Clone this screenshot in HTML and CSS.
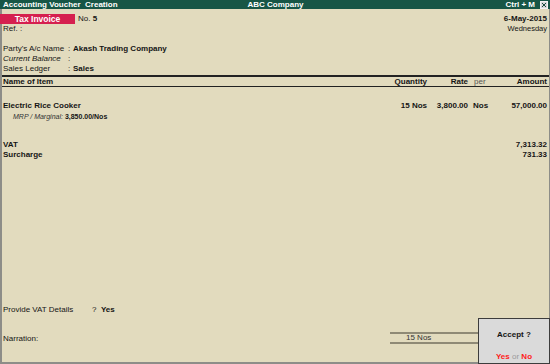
FILE: index.html
```html
<!DOCTYPE html>
<html lang="en">
<head>
    <meta charset="UTF-8">
    <meta name="viewport" content="width=device-width, initial-scale=1.0">
    <title>Accounting Voucher Creation</title>
    <link rel="stylesheet" href="styles.css">
</head>
<body>
    <div class="window">
        <div class="titlebar">
            <span class="title-left">Accounting Voucher &nbsp;Creation</span>
            <span class="title-mid">ABC Company</span>
            <span class="title-right">Ctrl + M
                <svg class="close" width="8" height="8" viewBox="0 0 8 8">
                    <rect x="0.5" y="0.5" width="7" height="7" fill="#d9d9d9" stroke="#f4f4f4"/>
                    <path d="M2 2 L6 6 M6 2 L2 6" stroke="#1a4d40" stroke-width="1"/>
                </svg>
            </span>
        </div>

        <div class="screen">
            <div class="head">
                <div class="head-left">
                    <div class="row">
                        <span class="badge">Tax Invoice</span>
                        <span class="no">No. <b>5</b></span>
                    </div>
                    <div class="row">Ref. :</div>
                </div>
                <div class="head-right">
                    <div class="row date">6-May-2015</div>
                    <div class="row day">Wednesday</div>
                </div>
            </div>

            <div class="party">
                <div class="row"><span class="lbl">Party's A/c Name</span><span class="colon">:</span><b>Akash Trading Company</b></div>
                <div class="row"><i class="lbl">Current Balance</i><span class="colon">:</span></div>
                <div class="row"><span class="lbl">Sales Ledger</span><span class="colon">:</span><b>Sales</b></div>
            </div>

            <div class="grid thead">
                <span>Name of Item</span>
                <span class="r">Quantity</span>
                <span class="r">Rate</span>
                <span class="per">per</span>
                <span class="r">Amount</span>
            </div>

            <div class="grid item">
                <span>Electric Rice Cooker</span>
                <span class="r">15 Nos</span>
                <span class="r">3,800.00</span>
                <span class="per-val">Nos</span>
                <span class="r">57,000.00</span>
            </div>
            <div class="mrp"><i>MRP / Marginal:</i> <b>3,850.00/Nos</b></div>

            <div class="grid tax first">
                <span>VAT</span><span></span><span></span><span></span>
                <span class="r">7,313.32</span>
            </div>
            <div class="grid tax">
                <span>Surcharge</span><span></span><span></span><span></span>
                <span class="r">731.33</span>
            </div>

            <div class="spacer"></div>

            <div class="foot">
                <div class="row vat"><span class="vat-lbl">Provide VAT Details</span><span>? &nbsp;<b>Yes</b></span></div>
                <div class="narration">
                    <span class="nar-lbl">Narration:</span>
                    <span class="total">15 Nos</span>
                </div>
            </div>
        </div>

        <div class="accept">
            <div class="accept-q">Accept ?</div>
            <div class="accept-a"><span class="red">Yes</span> <span class="or">or</span> <span class="red">No</span></div>
        </div>
    </div>
</body>
</html>
```

FILE: styles.css
```css
body {
    margin: 0;
    background-color: #e2dbbe;
    font-family: "Liberation Sans", Arial, sans-serif;
    font-size: 8px;
    color: #151515;
}
.window {
    position: relative;
    width: 550px;
    height: 364px;
    display: flex;
    flex-direction: column;
}
.titlebar {
    height: 9px;
    line-height: 9px;
    background-color: #175646;
    color: #ffffff;
    font-weight: bold;
    display: grid;
    grid-template-columns: 1fr auto 1fr;
    padding: 0 2px 0 3px;
    white-space: nowrap;
}
.title-right {
    display: flex;
    justify-content: flex-end;
    align-items: center;
    gap: 5px;
}
.close {
    display: block;
}
.screen {
    flex: 1;
    display: flex;
    flex-direction: column;
    border-left: 2px solid #8d8d88;
    border-right: 1px solid #8d8d88;
    border-bottom: 2px solid #8d8d88;
}
.row {
    height: 10px;
    line-height: 10px;
    display: flex;
    align-items: center;
    white-space: nowrap;
}
.head {
    display: flex;
    justify-content: space-between;
    padding: 5px 2px 0 0;
}
.badge {
    margin-left: -2px;
    width: 75px;
    height: 10px;
    background-color: #d5204f;
    color: #ffffff;
    font-weight: bold;
    font-size: 8.5px;
    text-align: center;
}
.no {
    margin-left: 3px;
}
.head-left .row + .row {
    padding-left: 1px;
}
.head-right .row {
    justify-content: flex-end;
}
.date {
    font-weight: bold;
}
.day {
    font-size: 7.5px;
}
.party {
    padding: 10px 0 1px 1px;
}
.lbl {
    width: 65px;
}
.colon {
    width: 5px;
}
.grid {
    display: grid;
    grid-template-columns: 1fr 60px 41px 36px 43px;
    padding: 0 2px 0 1px;
    height: 10px;
    line-height: 10px;
    font-weight: bold;
    white-space: nowrap;
}
.r {
    text-align: right;
}
.thead {
    border-top: 2px solid #222;
    border-bottom: 1px solid #222;
    height: 9px;
    line-height: 9px;
}
.per {
    padding-left: 6px;
    font-weight: normal;
    color: #555;
}
.per-val {
    padding-left: 5px;
}
.item {
    margin-top: 14px;
}
.mrp {
    height: 10px;
    line-height: 12px;
    padding-left: 11px;
    font-size: 7px;
}
.mrp i {
    color: #333;
}
.tax.first {
    margin-top: 19px;
}
.spacer {
    flex: 1;
}
.foot {
    padding: 0 0 18px 1px;
}
.vat-lbl {
    width: 89px;
}
.vat {
    margin-bottom: 17px;
}
.narration {
    display: flex;
    align-items: center;
    height: 12px;
}
.nar-lbl {
    width: 387px;
}
.total {
    width: 74px;
    height: 8px;
    line-height: 8px;
    padding-left: 16px;
    border-top: 2px solid #8f8a76;
    border-bottom: 2px solid #8f8a76;
    color: #333;
}
.accept {
    position: absolute;
    right: 0;
    bottom: 0;
    width: 70px;
    height: 44px;
    background-color: #dadada;
    border: 1px solid #3c3c3c;
    text-align: center;
    display: flex;
    flex-direction: column;
    justify-content: space-between;
}
.accept-q {
    margin-top: 11px;
    font-weight: bold;
}
.accept-a {
    margin-bottom: 2px;
    font-weight: bold;
}
.red {
    color: #ff1a1a;
}
.or {
    color: #9a9a9a;
    font-weight: normal;
}
```
